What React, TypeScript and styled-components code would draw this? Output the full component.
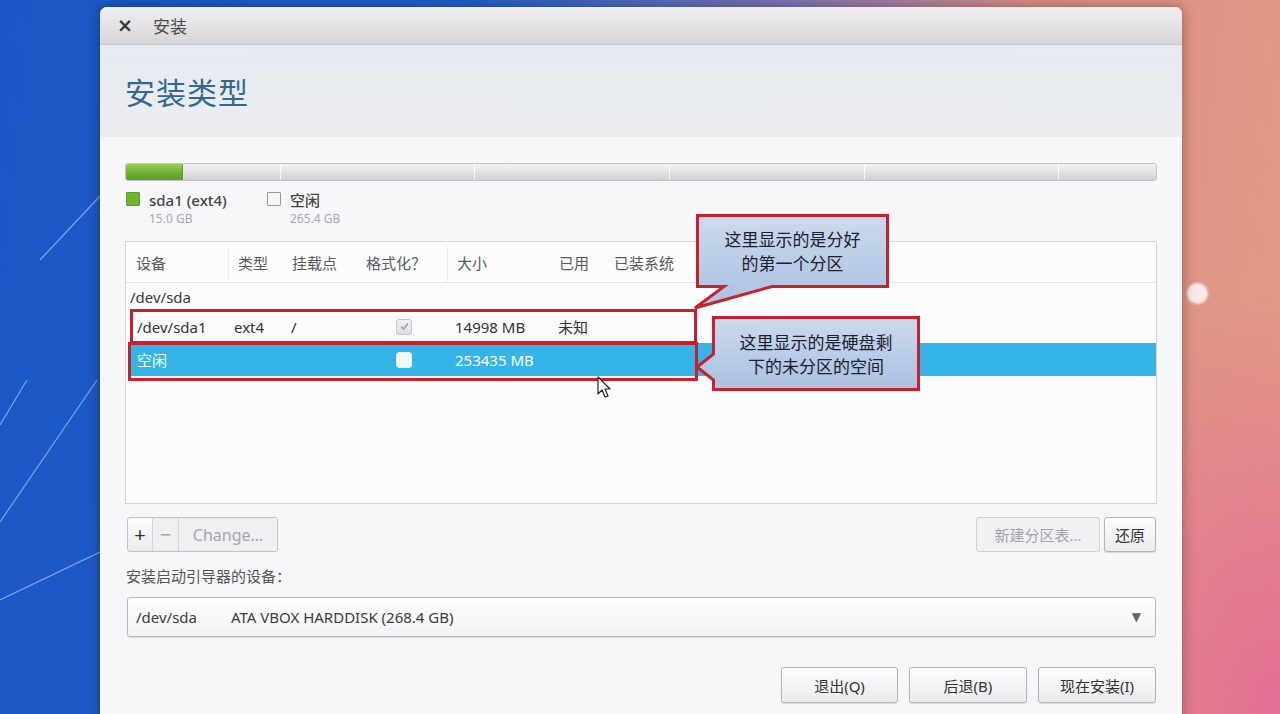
import React from 'react'
import styled, { createGlobalStyle } from 'styled-components'

const GlobalStyle = createGlobalStyle`
    html, body {
        margin: 0;
        padding: 0;
        width: 1280px;
        height: 714px;
        overflow: hidden;
    }
    body {
        font-family: "Noto Sans", "Noto Sans CJK SC", sans-serif;
    }
    * {
        box-sizing: border-box;
    }
`

const columns = ['设备', '类型', '挂载点', '格式化？', '大小', '已用', '已装系统']

export default function App() {
    return (
        <Desktop>
            <GlobalStyle />
            <WallpaperLines width="100" height="714" viewBox="0 0 100 714">
                <line x1="40" y1="260" x2="100" y2="196" />
                <line x1="0" y1="425" x2="27" y2="380" />
                <line x1="0" y1="522" x2="97" y2="380" />
                <line x1="0" y1="600" x2="100" y2="552" />
            </WallpaperLines>
            <Dot />
            <Window>
                <TitleBar>
                    <CloseX>×</CloseX>
                    <WindowTitle>安装</WindowTitle>
                </TitleBar>
                <Header>
                    <PageTitle>安装类型</PageTitle>
                </Header>
                <Body>
                    <PartitionBar>
                        <UsedPart />
                        <FreePart>
                            <Seg />
                            <Seg />
                            <Seg />
                            <Seg />
                            <Seg />
                        </FreePart>
                    </PartitionBar>
                    <Legend>
                        <LegendItem $width={141}>
                            <Swatch $fill="#6fb331" $border="#5c9b26" />
                            <LegendText>
                                <LegendName>sda1 (ext4)</LegendName>
                                <LegendSize>15.0 GB</LegendSize>
                            </LegendText>
                        </LegendItem>
                        <LegendItem>
                            <Swatch $fill="#f6f6f8" $border="#9a9a9e" />
                            <LegendText>
                                <LegendName>空闲</LegendName>
                                <LegendSize>265.4 GB</LegendSize>
                            </LegendText>
                        </LegendItem>
                    </Legend>
                    <TableBox>
                        <HeaderRow>
                            {columns.map((c, i) => (
                                <HeadCell key={i} $divider={i === 0 || i === 3}>{c}</HeadCell>
                            ))}
                        </HeaderRow>
                        <DiskRow>/dev/sda</DiskRow>
                        <PartRow>
                            <Cell>/dev/sda1</Cell>
                            <Cell $shift={-5}>ext4</Cell>
                            <Cell $shift={-2}>/</Cell>
                            <Cell $shift={29}>
                                <Check $checked>
                                    <svg width="11" height="11" viewBox="0 0 11 11">
                                        <path d="M2 5.5 L4.5 8 L9 2.5" fill="none" stroke="#9a9aa2" strokeWidth="1.4" />
                                    </svg>
                                </Check>
                            </Cell>
                            <Cell $shift={-3}>14998 MB</Cell>
                            <Cell $shift={-2}>未知</Cell>
                            <Cell />
                        </PartRow>
                        <PartRow $selected>
                            <Cell>空闲</Cell>
                            <Cell />
                            <Cell />
                            <Cell $shift={29}>
                                <Check />
                            </Cell>
                            <Cell $shift={-3}>253435 MB</Cell>
                            <Cell />
                            <Cell />
                        </PartRow>
                        <RedFrame $top={67} $left={4} $width={567} $height={35} />
                        <RedFrame $top={100} $left={2} $width={570} $height={39} />
                        <Cursor width="16" height="24" viewBox="0 0 16 24">
                            <path d="M1 1 L1 18 L5 14 L8 21 L11 20 L8 13 L13 13 Z" fill="#fff" stroke="#222" strokeWidth="1.2" strokeLinejoin="round" />
                        </Cursor>
                    </TableBox>
                    <Toolbar>
                        <ButtonGroup>
                            <GroupButton $width={25}>+</GroupButton>
                            <GroupButton $width={26} $disabled>−</GroupButton>
                            <GroupButton $width={98} $disabled $last>Change…</GroupButton>
                        </ButtonGroup>
                        <RightTools>
                            <ToolButton $width={124} $disabled>新建分区表…</ToolButton>
                            <ToolButton $width={52}>还原</ToolButton>
                        </RightTools>
                    </Toolbar>
                    <FieldLabel>安装启动引导器的设备：</FieldLabel>
                    <Combo>
                        <ComboText>
                            <span>/dev/sda</span>
                            <span>ATA VBOX HARDDISK (268.4 GB)</span>
                        </ComboText>
                        <ComboArrow>▼</ComboArrow>
                    </Combo>
                    <Footer>
                        <ToolButton $width={117} $height={36}>退出(Q)</ToolButton>
                        <ToolButton $width={118} $height={36}>后退(B)</ToolButton>
                        <ToolButton $width={118} $height={36}>现在安装(I)</ToolButton>
                    </Footer>
                </Body>
                <Callout $left={596} $top={207} $width={193} $height={74}>
                    <CalloutShape width="193" height="74" viewBox="0 0 193 74">
                        <defs>
                            <linearGradient id="cg1" x1="0" y1="0" x2="0" y2="1">
                                <stop offset="0" stopColor="#cbdaee" />
                                <stop offset="1" stopColor="#a9c1e0" />
                            </linearGradient>
                        </defs>
                        <path d="M1.5 1.5 H191.5 V72.5 H76 L-1 94 L28 72.5 H1.5 Z" fill="url(#cg1)" stroke="#c8202c" strokeWidth="3" strokeLinejoin="miter" />
                    </CalloutShape>
                    <CalloutText>这里显示的是分好<br />的第一个分区</CalloutText>
                </Callout>
                <Callout $left={612} $top={309} $width={208} $height={75}>
                    <CalloutShape width="208" height="75" viewBox="0 0 208 75">
                        <defs>
                            <linearGradient id="cg2" x1="0" y1="0" x2="0" y2="1">
                                <stop offset="0" stopColor="#cbdaee" />
                                <stop offset="1" stopColor="#a9c1e0" />
                            </linearGradient>
                        </defs>
                        <path d="M1.5 1.5 H206.5 V73.5 H1.5 V64 L-15 51 L1.5 38 Z" fill="url(#cg2)" stroke="#c8202c" strokeWidth="3" strokeLinejoin="miter" />
                    </CalloutShape>
                    <CalloutText>这里显示的是硬盘剩<br />下的未分区的空间</CalloutText>
                </Callout>
            </Window>
        </Desktop>
    )
}

const Desktop = styled.div`
    position: relative;
    width: 1280px;
    height: 714px;
    overflow: hidden;
    padding: 7px 98px 0 100px;
    background:
        radial-gradient(ellipse 260px 420px at 1280px 714px, rgba(228, 104, 150, 0.9), rgba(228, 104, 150, 0) 100%),
        linear-gradient(96deg, #1b56c6 0%, #2260c6 35%, #7d74b4 58%, #d88f86 76%, #e49a86 100%);
`

const WallpaperLines = styled.svg`
    position: absolute;
    left: 0;
    top: 0;
    line {
        stroke: rgba(190, 215, 255, 0.6);
        stroke-width: 1.2;
    }
`

const Dot = styled.div`
    position: absolute;
    left: 1187px;
    top: 283px;
    width: 21px;
    height: 21px;
    border-radius: 50%;
    background: rgba(255, 255, 255, 0.8);
    filter: blur(1px);
`

const Window = styled.div`
    position: relative;
    width: 1082px;
    height: 720px;
    display: flex;
    flex-direction: column;
    background: #f7f7f9;
    border-radius: 7px 7px 0 0;
    box-shadow: 0 0 14px rgba(0, 0, 0, 0.35);
`

const TitleBar = styled.div`
    height: 38px;
    display: flex;
    align-items: center;
    padding-left: 17px;
    border-radius: 7px 7px 0 0;
    background: linear-gradient(#f1eff1, #d7d5d7);
    border-bottom: 1px solid #c9c7c9;
`

const CloseX = styled.span`
    font-family: "DejaVu Sans", sans-serif;
    font-size: 19px;
    font-weight: 700;
    color: #3a3a3a;
    line-height: 1;
`

const WindowTitle = styled.span`
    margin-left: 20px;
    font-family: "Noto Sans CJK SC", sans-serif;
    font-size: 17px;
    color: #4a4a4a;
`

const Header = styled.div`
    height: 92px;
    display: flex;
    align-items: center;
    padding-left: 25px;
    background: linear-gradient(#e7ebf1, #eaecf0);
`

const PageTitle = styled.h1`
    margin: 0;
    font-family: "Noto Sans CJK SC", sans-serif;
    font-size: 30px;
    font-weight: 400;
    letter-spacing: 1px;
    color: #34698f;
`

const Body = styled.div`
    display: flex;
    flex-direction: column;
    padding: 26px 25px 0 25px;
`

const PartitionBar = styled.div`
    height: 18px;
    display: flex;
    border: 1px solid #c4c4c8;
    border-radius: 3px;
    overflow: hidden;
`

const UsedPart = styled.div`
    width: 57px;
    background: linear-gradient(#9ccf52, #6aae2e 60%, #5b9d26);
    border-right: 1px solid #5b9d26;
`

const FreePart = styled.div`
    flex: 1;
    display: flex;
    justify-content: space-around;
    background: linear-gradient(#f2f2f4, #e2e2e5 55%, #cfcfd3);
`

const Seg = styled.div`
    width: 1px;
    background: rgba(255, 255, 255, 0.8);
`

const Legend = styled.div`
    display: flex;
    margin-top: 9px;
    padding-left: 1px;
`

const LegendItem = styled.div<{ $width?: number }>`
    display: flex;
    gap: 9px;
    width: ${p => (p.$width ? p.$width + 'px' : 'auto')};
`

const Swatch = styled.div<{ $fill: string; $border: string }>`
    width: 14px;
    height: 14px;
    margin-top: 2px;
    background: ${p => p.$fill};
    border: 1px solid ${p => p.$border};
    border-radius: 1px;
`

const LegendText = styled.div`
    display: flex;
    flex-direction: column;
`

const LegendName = styled.span`
    font-size: 15px;
    line-height: 20px;
    font-weight: 500;
    color: #444;
`

const LegendSize = styled.span`
    font-size: 12px;
    line-height: 18px;
    color: #a8a8ac;
`

const TableBox = styled.div`
    position: relative;
    height: 263px;
    margin-top: 13px;
    background: #fcfcfd;
    border: 1px solid #d6d6da;
`

const grid = `
    display: grid;
    grid-template-columns: 102px 54px 74px 91px 102px 55px 1fr;
    padding-left: 10px;
    align-items: center;
`

const HeaderRow = styled.div`
    ${grid}
    height: 41px;
    border-bottom: 1px solid #e4e4e8;
`

const HeadCell = styled.div<{ $divider?: boolean }>`
    position: relative;
    height: 100%;
    display: flex;
    align-items: center;
    font-family: "Noto Sans CJK SC", sans-serif;
    font-size: 15px;
    color: #5a5a5e;
    &::after {
        content: '';
        display: ${p => (p.$divider ? 'block' : 'none')};
        position: absolute;
        right: 9px;
        top: 4px;
        bottom: 0;
        width: 1px;
        background: #ececef;
    }
`

const DiskRow = styled.div`
    height: 27px;
    display: flex;
    align-items: center;
    padding-left: 4px;
    font-size: 15px;
    color: #3a3a3e;
`

const PartRow = styled.div<{ $selected?: boolean }>`
    ${grid}
    height: 33px;
    margin-left: 2px;
    padding-left: 9px;
    font-size: 15px;
    color: ${p => (p.$selected ? '#ffffff' : '#333')};
    background: ${p => (p.$selected ? '#35b4e8' : 'transparent')};
`

const Cell = styled.div<{ $shift?: number }>`
    display: flex;
    align-items: center;
    white-space: nowrap;
    margin-left: ${p => p.$shift || 0}px;
`

const Check = styled.div<{ $checked?: boolean }>`
    width: 16px;
    height: 16px;
    display: flex;
    align-items: center;
    justify-content: center;
    border-radius: 3px;
    border: 1px solid ${p => (p.$checked ? '#c4c4ca' : '#e8eef2')};
    background: ${p => (p.$checked ? 'linear-gradient(#f2f2f5, #dcdce2)' : '#f4f6f8')};
`

const RedFrame = styled.div<{ $top: number; $left: number; $width: number; $height: number }>`
    position: absolute;
    top: ${p => p.$top}px;
    left: ${p => p.$left}px;
    width: ${p => p.$width}px;
    height: ${p => p.$height}px;
    border: 3px solid #c8202c;
`

const Cursor = styled.svg`
    position: absolute;
    left: 471px;
    top: 134px;
`

const Toolbar = styled.div`
    display: flex;
    justify-content: space-between;
    margin-top: 13px;
    padding: 0 1px 0 2px;
`

const ButtonGroup = styled.div`
    display: flex;
    height: 35px;
    border: 1px solid #c2c2c6;
    border-radius: 3px;
    overflow: hidden;
    background: linear-gradient(#fbfbfc, #ececef);
`

const GroupButton = styled.div<{ $width: number; $disabled?: boolean; $last?: boolean }>`
    width: ${p => p.$width}px;
    display: flex;
    align-items: center;
    justify-content: center;
    font-size: ${p => (p.$last ? 16 : 20)}px;
    color: ${p => (p.$disabled ? '#a6a6aa' : '#2e2e2e')};
    border-right: ${p => (p.$last ? 'none' : '1px solid #d6d6da')};
    background: ${p => (p.$disabled ? '#f0f0f2' : 'transparent')};
`

const RightTools = styled.div`
    display: flex;
    gap: 4px;
`

const ToolButton = styled.div<{ $width: number; $height?: number; $disabled?: boolean }>`
    width: ${p => p.$width}px;
    height: ${p => p.$height || 35}px;
    display: flex;
    align-items: center;
    justify-content: center;
    font-family: "Noto Sans", "Noto Sans CJK SC", sans-serif;
    font-size: 15px;
    color: ${p => (p.$disabled ? '#a4a4a8' : '#333')};
    border: 1px solid ${p => (p.$disabled ? '#d2d2d6' : '#b4b4b8')};
    border-radius: 3px;
    background: ${p => (p.$disabled ? '#f1f1f3' : 'linear-gradient(#fdfdfe, #ececef)')};
    box-shadow: ${p => (p.$disabled ? 'none' : '0 1px 1px rgba(0,0,0,0.12)')};
`

const FieldLabel = styled.div`
    margin-top: 15px;
    padding-left: 1px;
    font-family: "Noto Sans CJK SC", sans-serif;
    font-size: 15px;
    line-height: 18px;
    color: #555;
`

const Combo = styled.div`
    height: 40px;
    margin: 12px 1px 0 2px;
    display: flex;
    align-items: center;
    justify-content: space-between;
    padding: 0 14px 0 8px;
    border: 1px solid #b9b9bd;
    border-radius: 3px;
    background: linear-gradient(#fefefe, #f3f3f5);
    box-shadow: 0 1px 1px rgba(0, 0, 0, 0.1);
`

const ComboText = styled.div`
    display: flex;
    gap: 34px;
    font-size: 15px;
    color: #3c3c40;
`

const ComboArrow = styled.span`
    font-family: "DejaVu Sans", sans-serif;
    font-size: 12px;
    color: #666;
`

const Footer = styled.div`
    display: flex;
    justify-content: flex-end;
    gap: 11px;
    margin-top: 30px;
    padding-right: 1px;
`

const Callout = styled.div<{ $left: number; $top: number; $width: number; $height: number }>`
    position: absolute;
    left: ${p => p.$left}px;
    top: ${p => p.$top}px;
    width: ${p => p.$width}px;
    height: ${p => p.$height}px;
    display: flex;
    align-items: center;
    justify-content: center;
`

const CalloutShape = styled.svg`
    position: absolute;
    left: 0;
    top: 0;
    overflow: visible;
`

const CalloutText = styled.div`
    position: relative;
    font-family: "Noto Sans CJK SC", sans-serif;
    font-size: 17px;
    line-height: 24px;
    text-align: center;
    color: #20202c;
`
